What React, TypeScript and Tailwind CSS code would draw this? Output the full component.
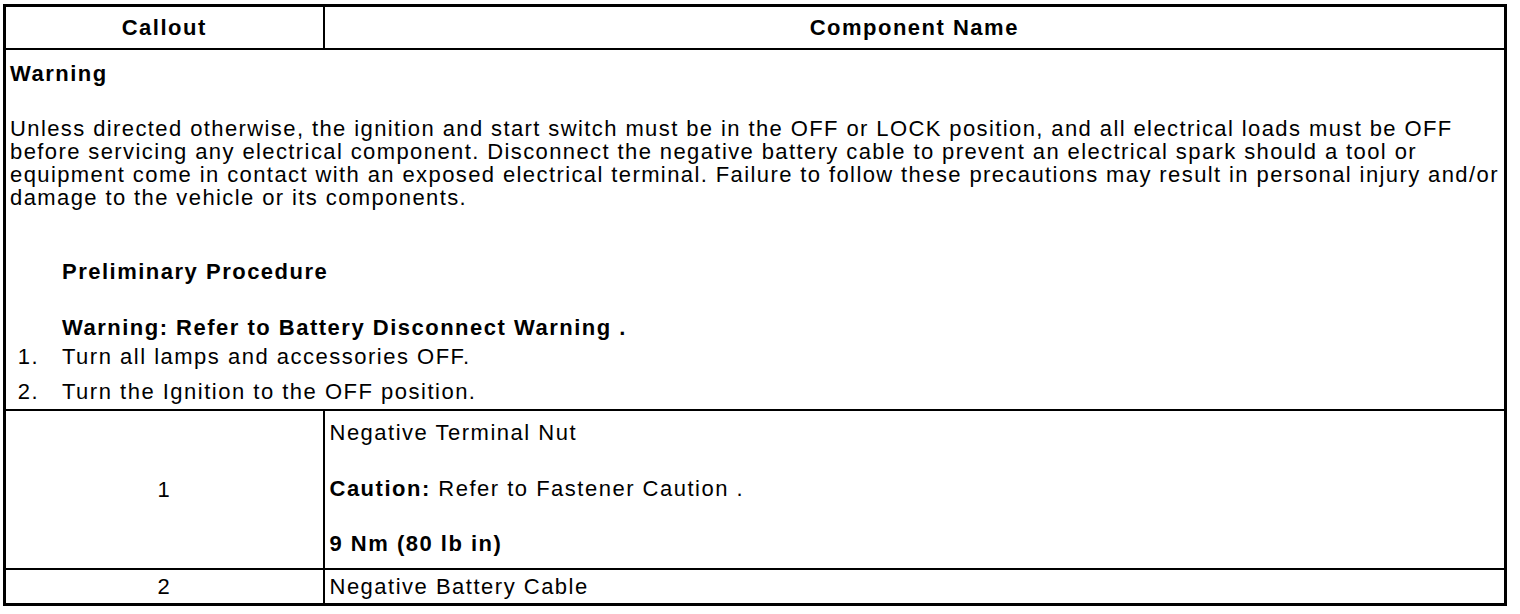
import React from "react";

// Component location table — one warning block, then the callout rows.

const cell = "border-2 border-black align-middle";

export default function App() {
  return (
    <div className="min-h-screen bg-white pl-[3px] pt-[4px] text-black font-['Liberation_Sans',Arial,sans-serif] text-[22px] leading-[23px] tracking-[1.5px]">
      <table className="w-[1504px] border-collapse border-[3px] border-black">
        <colgroup>
          <col className="w-[319px]" />
          <col />
        </colgroup>
        <thead>
          <tr className="h-[43px]">
            <th className={`${cell} font-bold`}>Callout</th>
            <th className={`${cell} font-bold`}>Component Name</th>
          </tr>
        </thead>
        <tbody>
          <tr>
            <td colSpan={2} className={`${cell} px-[4px] pt-[12px] pb-[6px]`}>
              <p className="font-bold">Warning</p>
              <p className="mt-[32px] tracking-[1.4px] whitespace-nowrap">
                Unless directed otherwise, the ignition and start switch must be in the OFF or LOCK position, and all
                electrical loads must be OFF
                <br />
                before servicing any electrical component. Disconnect the negative battery cable to prevent an
                electrical spark should a tool or
                <br />
                equipment come in contact with an exposed electrical terminal. Failure to follow these precautions may
                result in personal injury and/or
                <br />
                damage to the vehicle or its components.
              </p>
              <p className="mt-[51px] pl-[52px] font-bold">Preliminary Procedure</p>
              <p className="mt-[33px] pl-[52px] font-bold">Warning: Refer to Battery Disconnect Warning .</p>
              <ol className="mt-[6px] flex flex-col gap-[12px]">
                {["Turn all lamps and accessories OFF.", "Turn the Ignition to the OFF position."].map((t, i) => (
                  <li key={i} className="flex">
                    <span className="w-[52px] shrink-0 pr-[23px] text-right">{i + 1}.</span>
                    <span>{t}</span>
                  </li>
                ))}
              </ol>
            </td>
          </tr>
          <tr>
            <td className={`${cell} text-center`}>1</td>
            <td className={`${cell} px-[5px] pt-[10px] pb-[13px]`}>
              <p>Negative Terminal Nut</p>
              <p className="mt-[33px]">
                <span className="font-bold">Caution:</span> Refer to Fastener Caution .
              </p>
              <p className="mt-[32px] font-bold">9 Nm (80 lb in)</p>
            </td>
          </tr>
          <tr className="h-[36px]">
            <td className={`${cell} text-center`}>2</td>
            <td className={`${cell} px-[5px]`}>Negative Battery Cable</td>
          </tr>
        </tbody>
      </table>
    </div>
  );
}
